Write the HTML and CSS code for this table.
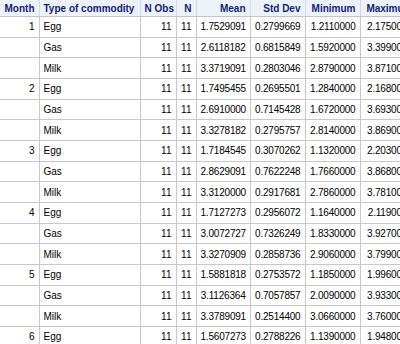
FILE: index.html
```html
<!DOCTYPE html>
<html lang="en">
<head>
    <meta charset="UTF-8">
    <meta name="viewport" content="width=device-width, initial-scale=1.0">
    <title>Summary Statistics by Month</title>
    <link rel="stylesheet" href="styles.css">
</head>
<body>
    <!-- Means procedure output, grouped by month and commodity -->
    <table class="stats-table">
        <colgroup>
            <col class="col-month">
            <col class="col-type">
            <col class="col-nobs">
            <col class="col-n">
            <col class="col-mean">
            <col class="col-std">
            <col class="col-min">
            <col class="col-max">
        </colgroup>
        <thead>
            <tr>
                <th class="num">Month</th>
                <th>Type of commodity</th>
                <th class="num">N Obs</th>
                <th class="num">N</th>
                <th class="num">Mean</th>
                <th class="num">Std Dev</th>
                <th class="num">Minimum</th>
                <th class="num">Maximum</th>
            </tr>
        </thead>
        <tbody>
            <tr><td class="num">1</td><td>Egg</td><td class="num">11</td><td class="num">11</td><td class="num val">1.7529091</td><td class="num val">0.2799669</td><td class="num val">1.2110000</td><td class="num val">2.1750000</td></tr>
            <tr><td></td><td>Gas</td><td class="num">11</td><td class="num">11</td><td class="num val">2.6118182</td><td class="num val">0.6815849</td><td class="num val">1.5920000</td><td class="num val">3.3990000</td></tr>
            <tr><td></td><td>Milk</td><td class="num">11</td><td class="num">11</td><td class="num val">3.3719091</td><td class="num val">0.2803046</td><td class="num val">2.8790000</td><td class="num val">3.8710000</td></tr>

            <tr><td class="num">2</td><td>Egg</td><td class="num">11</td><td class="num">11</td><td class="num val">1.7495455</td><td class="num val">0.2695501</td><td class="num val">1.2840000</td><td class="num val">2.1680000</td></tr>
            <tr><td></td><td>Gas</td><td class="num">11</td><td class="num">11</td><td class="num val">2.6910000</td><td class="num val">0.7145428</td><td class="num val">1.6720000</td><td class="num val">3.6930000</td></tr>
            <tr><td></td><td>Milk</td><td class="num">11</td><td class="num">11</td><td class="num val">3.3278182</td><td class="num val">0.2795757</td><td class="num val">2.8140000</td><td class="num val">3.8690000</td></tr>

            <tr><td class="num">3</td><td>Egg</td><td class="num">11</td><td class="num">11</td><td class="num val">1.7184545</td><td class="num val">0.3070262</td><td class="num val">1.1320000</td><td class="num val">2.2030000</td></tr>
            <tr><td></td><td>Gas</td><td class="num">11</td><td class="num">11</td><td class="num val">2.8629091</td><td class="num val">0.7622248</td><td class="num val">1.7660000</td><td class="num val">3.8680000</td></tr>
            <tr><td></td><td>Milk</td><td class="num">11</td><td class="num">11</td><td class="num val">3.3120000</td><td class="num val">0.2917681</td><td class="num val">2.7860000</td><td class="num val">3.7810000</td></tr>

            <tr><td class="num">4</td><td>Egg</td><td class="num">11</td><td class="num">11</td><td class="num val">1.7127273</td><td class="num val">0.2956072</td><td class="num val">1.1640000</td><td class="num val">2.1190000</td></tr>
            <tr><td></td><td>Gas</td><td class="num">11</td><td class="num">11</td><td class="num val">3.0072727</td><td class="num val">0.7326249</td><td class="num val">1.8330000</td><td class="num val">3.9270000</td></tr>
            <tr><td></td><td>Milk</td><td class="num">11</td><td class="num">11</td><td class="num val">3.3270909</td><td class="num val">0.2858736</td><td class="num val">2.9060000</td><td class="num val">3.7990000</td></tr>

            <tr><td class="num">5</td><td>Egg</td><td class="num">11</td><td class="num">11</td><td class="num val">1.5881818</td><td class="num val">0.2753572</td><td class="num val">1.1850000</td><td class="num val">1.9960000</td></tr>
            <tr><td></td><td>Gas</td><td class="num">11</td><td class="num">11</td><td class="num val">3.1126364</td><td class="num val">0.7057857</td><td class="num val">2.0090000</td><td class="num val">3.9330000</td></tr>
            <tr><td></td><td>Milk</td><td class="num">11</td><td class="num">11</td><td class="num val">3.3789091</td><td class="num val">0.2514400</td><td class="num val">3.0660000</td><td class="num val">3.7600000</td></tr>

            <tr><td class="num">6</td><td>Egg</td><td class="num">11</td><td class="num">11</td><td class="num val">1.5607273</td><td class="num val">0.2788226</td><td class="num val">1.1390000</td><td class="num val">1.9480000</td></tr>
        </tbody>
    </table>
</body>
</html>
```

FILE: styles.css
```css
body {
    margin: 0;
    background-color: #fff;
    overflow: hidden; /* the table runs past the right edge */
    font-family: 'Liberation Sans', Arial, sans-serif;
}
.stats-table {
    border-collapse: collapse;
    table-layout: fixed;
    width: 417px;
    font-size: 10px;
    color: #000;
}
.col-month { width: 39px; }
.col-type { width: 101px; }
.col-nobs { width: 36px; }
.col-n { width: 20px; }
.col-mean { width: 54px; }
.col-std { width: 55px; }
.col-min { width: 55px; }
.col-max { width: 57px; }
.stats-table th,
.stats-table td {
    padding: 0 4px;
    white-space: nowrap;
    overflow: hidden;
    text-align: left;
}
.stats-table th {
    height: 16px;
    background-color: #edf2f9;
    color: #112277;
    font-weight: bold;
    border: 1px solid #d2d8e4;
    border-top: none;
    border-bottom-color: #c4c4c4;
}
.stats-table td {
    height: 19.67px;
    background-color: #fff;
    border: 1px solid #c8c8c8;
}
.stats-table th:first-child,
.stats-table td:first-child {
    border-left: none;
    padding-left: 2px;
}
.stats-table .num {
    text-align: right;
}
.stats-table .val {
    letter-spacing: -0.2px;
}
```
